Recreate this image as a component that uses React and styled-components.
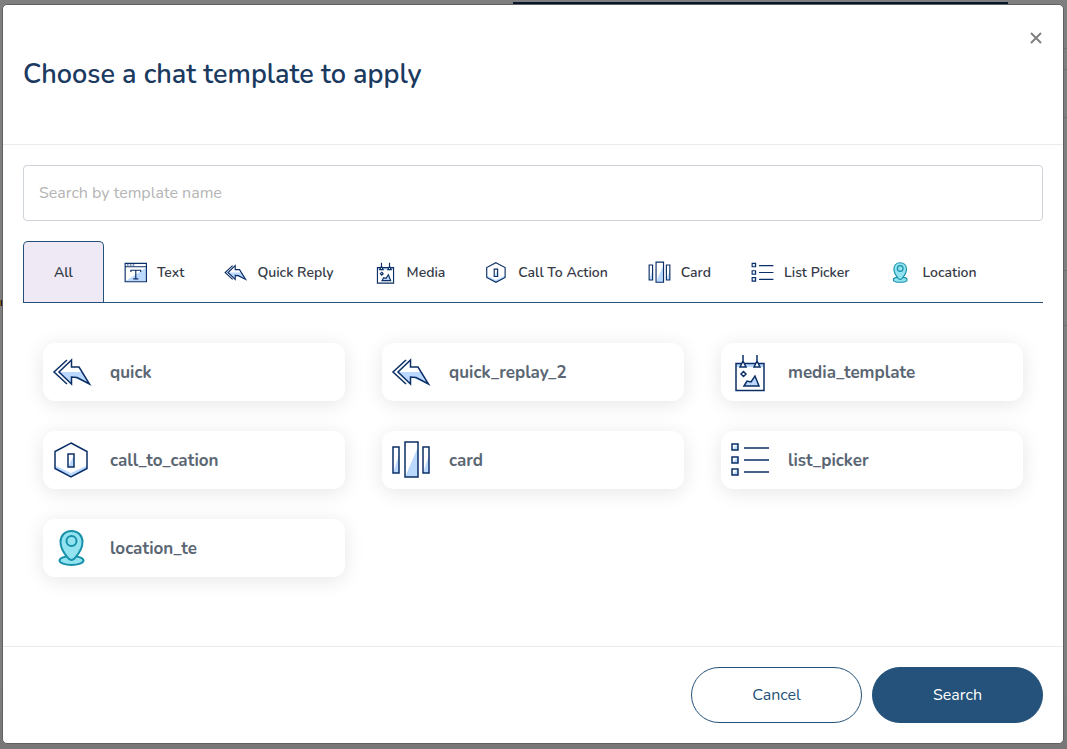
import React, { useState } from "react";
import styled, { createGlobalStyle } from "styled-components";

const NAVY = "#0b2f66";
const SKY = "#bbd8ff";
const BLUE = "#24527a";

const GlobalStyle = createGlobalStyle`
  * { box-sizing: border-box; }
  body { margin: 0; background: #7f7f7f; font-family: Nunito, "Open Sans", sans-serif; }
  button, input { font-family: inherit; }
`;

const Page = styled.div`
  position: relative;
  min-height: 100vh;
  display: flex;
  padding: 4px 3px 5px 2px;
  background: linear-gradient(#7f7f7f 0 90%, #777 100%);
`;

const BackdropBar = styled.div`
  position: absolute;
  top: 2px;
  left: 513px;
  right: 59px;
  height: 8px;
  background: #06172b;
`;

const BackdropRows = styled.div`
  position: absolute;
  top: 0;
  right: 0;
  width: 8px;
  display: grid;
  grid-template-rows: 49px 21px 48px 153px 55px;
  span { border-bottom: 1px solid #6c7073; }
`;

const BackdropMark = styled.div`
  position: absolute;
  top: 300px;
  left: 0;
  width: 4px;
  height: 6px;
  border-left: 1px solid #8a5a10;
  background: #0b1d33;
`;

const Modal = styled.section`
  position: relative;
  flex: 1;
  display: flex;
  flex-direction: column;
  background: #fff;
  border: 1px solid #606060;
  border-radius: 5px;
`;

const Header = styled.header`
  display: flex;
  justify-content: space-between;
  align-items: flex-start;
  height: 140px;
  padding: 20px;
  border-bottom: 1px solid #ebebeb;
`;

const Title = styled.h1`
  margin: 30px 0 0;
  font-size: 27px;
  line-height: 40px;
  font-weight: 600;
  color: #1b3a5f;
`;

const CloseButton = styled.button`
  display: flex;
  padding: 5px 0;
  border: 0;
  background: none;
  color: #808080;
`;

const Body = styled.div`
  flex: 1;
  padding: 20px;
`;

const SearchInput = styled.input`
  display: block;
  width: 100%;
  height: 56px;
  padding: 0 15px;
  border: 1px solid #ced4da;
  border-radius: 4px;
  font-size: 16px;
  color: #495057;
  &::placeholder { color: #b4b4b4; opacity: 1; }
`;

const Tabs = styled.div`
  display: flex;
  margin-top: 20px;
  border-bottom: 1px solid ${BLUE};
`;

const Tab = styled.button`
  display: flex;
  align-items: center;
  gap: 10px;
  height: 62px;
  margin-bottom: -1px;
  padding: 0 ${(p) => (p.$plain ? 30 : 19)}px;
  border: 1px solid ${(p) => (p.$active ? BLUE : "transparent")};
  border-bottom: 0;
  border-radius: 5px 5px 0 0;
  background: ${(p) => (p.$active ? "#efe9f5" : "transparent")};
  background-clip: padding-box;
  box-shadow: ${(p) => (p.$active ? `inset 0 -1px ${BLUE}` : "none")};
  font-size: 14px;
  font-weight: 600;
  white-space: nowrap;
  color: #343a46;
`;

const TemplateGrid = styled.div`
  display: grid;
  grid-template-columns: repeat(3, 1fr);
  gap: 30px 37px;
  padding: 40px 20px 0;
`;

const TemplateCard = styled.button`
  display: flex;
  align-items: center;
  gap: 18px;
  height: 58px;
  padding: 0 9px;
  border: 0;
  border-radius: 12px;
  background: #fff;
  box-shadow: 0 3px 20px rgba(0, 0, 0, 0.1);
  font-size: 17px;
  font-weight: 700;
  color: #5a6673;
`;

const Footer = styled.footer`
  display: flex;
  justify-content: flex-end;
  gap: 10px;
  padding: 20px;
  border-top: 1px solid #ebebeb;
`;

const ActionButton = styled.button`
  width: 171px;
  height: 56px;
  border: 1px solid ${BLUE};
  border-radius: 28px;
  background: ${(p) => (p.$primary ? BLUE : "#fff")};
  color: ${(p) => (p.$primary ? "#fff" : BLUE)};
  font-size: 16px;
`;

const Drawing = styled.svg`
  flex: none;
  overflow: visible;
`;

const shapes = {
  text: (
    <>
      <path d="M2 35 38 12v23z" fill={SKY} stroke="none" />
      <path d="M2 4h37v32H2zM2 10h37" />
      <path d="M5 7h3M10 7h3M15 7h3" />
      <path d="M12 19v-3h17v3M20.500 16v15M16 31h9" />
    </>
  ),
  reply: (
    <>
      <path d="M6 20h25l6 12-17-7v7z" fill={SKY} stroke="none" />
      <path d="M19.500 8v7H27l10.500 17L25 25.500l-5.500-.5v7L7 20z" />
      <path d="M15 8 2 20l13 12" />
    </>
  ),
  media: (
    <>
      <path d="M6 11.500h28V15H6z" fill={SKY} stroke="none" />
      <path d="M6 11.500h28v27H6z" />
      <path d="M13 3v6l-3 6h6l-3-6M27 3v6l-3 6h6l-3-6" fill="#fff" />
      <path d="m13.500 19.500 2.500 2.500-2.500 2.500L11 22z" />
      <path d="m14 34 3-5 4 1 4-6 4 10z" fill={SKY} />
    </>
  ),
  action: (
    <>
      <path d="M3 25.500 19 33l16-7.500V29l-16 8-16-8z" fill={SKY} stroke="none" />
      <path d="m19 3 16 8.500v17L19 37 3 28.500v-17z" />
      <path d="m16 27 6-12v12z" fill={SKY} stroke="none" />
      <path d="M16 14h6v13h-6z" />
    </>
  ),
  card: (
    <>
      <path d="m2 33 6-18v18zM14 37l13-30v30zM32 33l6-18v18z" fill={SKY} stroke="none" />
      <path d="M2 7h6v26H2zM14 2h13v35H14zM32 7h6v26h-6z" />
    </>
  ),
  list: (
    <>
      <path d="m2 10 6-6v6zM2 23l6-6v6zM2 35l6-6v6z" fill={SKY} stroke="none" />
      <path d="M2 4h6v6H2zM2 17h6v6H2zM2 29h6v6H2z" />
      <path d="M14 8h25M14 20h25M14 32h25" />
    </>
  ),
  location: (
    <g fill="#92e3ef" stroke="#1790aa" strokeWidth="2">
      <ellipse cx="19.500" cy="32.500" rx="12" ry="4.500" />
      <path d="M19.500 3c-7 0-11 5-11 11 0 8 5 13 8 16.500 2 2 4 2 6 0 3-3.500 8-8.500 8-16.500 0-6-4-11-11-11z" />
      <circle cx="19.500" cy="13" r="5" />
    </g>
  ),
};

function Icon({ name, size }) {
  return (
    <Drawing
      width={size}
      height={size}
      viewBox="0 0 40 40"
      fill="none"
      stroke={NAVY}
      strokeWidth={size < 30 ? 2 : 1.5}
      aria-hidden="true"
    >
      {shapes[name]}
    </Drawing>
  );
}

const tabs = [
  { label: "All" },
  { label: "Text", icon: "text" },
  { label: "Quick Reply", icon: "reply" },
  { label: "Media", icon: "media" },
  { label: "Call To Action", icon: "action" },
  { label: "Card", icon: "card" },
  { label: "List Picker", icon: "list" },
  { label: "Location", icon: "location" },
];

const templates = [
  { name: "quick", icon: "reply" },
  { name: "quick_replay_2", icon: "reply" },
  { name: "media_template", icon: "media" },
  { name: "call_to_cation", icon: "action" },
  { name: "card", icon: "card" },
  { name: "list_picker", icon: "list" },
  { name: "location_te", icon: "location" },
];

export default function App() {
  const [active, setActive] = useState("All");
  return (
    <Page>
      <GlobalStyle />
      <BackdropBar />
      <BackdropRows aria-hidden="true">
        <span />
        <span />
        <span />
        <span />
        <span />
      </BackdropRows>
      <BackdropMark />
      <Modal role="dialog" aria-labelledby="title">
        <Header>
          <Title id="title">Choose a chat template to apply</Title>
          <CloseButton aria-label="Close">
            <svg width="15" height="15" viewBox="0 0 15 15" stroke="currentColor" strokeWidth="2">
              <path d="M3 3l10 10M13 3 3 13" />
            </svg>
          </CloseButton>
        </Header>
        <Body>
          <SearchInput aria-label="Search by template name" placeholder="Search by template name" />
          <Tabs role="tablist">
            {tabs.map(({ label, icon }) => (
              <Tab
                key={label}
                role="tab"
                aria-selected={active === label}
                $active={active === label}
                $plain={!icon}
                onClick={() => setActive(label)}
              >
                {icon && <Icon name={icon} size={23} />}
                {label}
              </Tab>
            ))}
          </Tabs>
          <TemplateGrid>
            {templates.map(({ name, icon }) => (
              <TemplateCard key={name}>
                <Icon name={icon} size={40} />
                {name}
              </TemplateCard>
            ))}
          </TemplateGrid>
        </Body>
        <Footer>
          <ActionButton>Cancel</ActionButton>
          <ActionButton $primary>Search</ActionButton>
        </Footer>
      </Modal>
    </Page>
  );
}
